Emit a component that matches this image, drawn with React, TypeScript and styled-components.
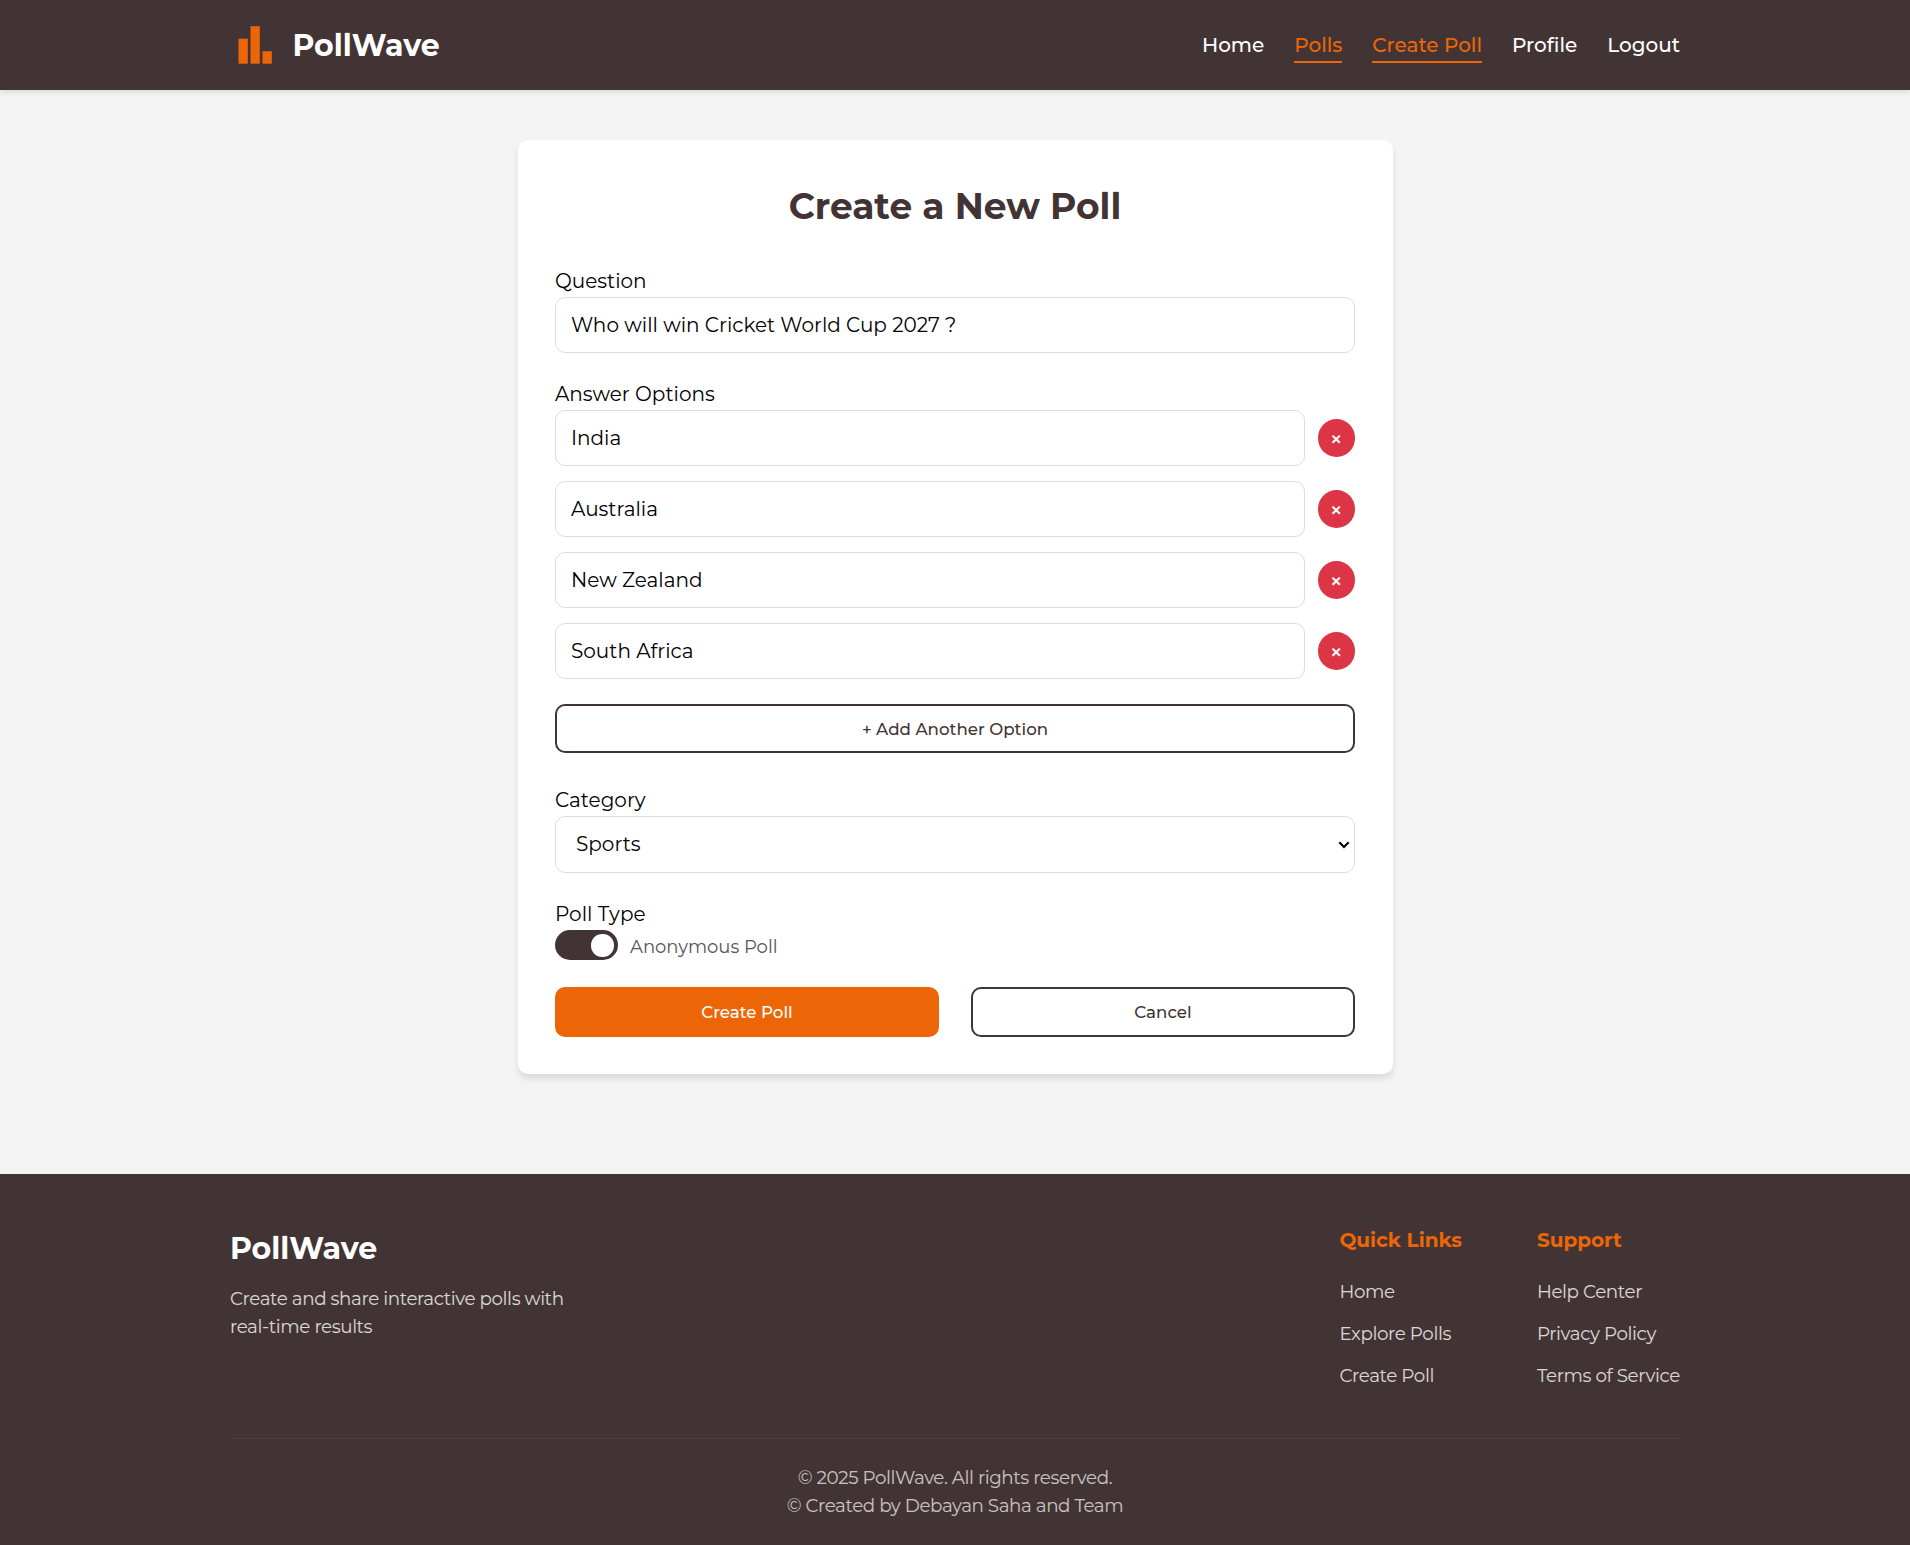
import React, { useState } from "react";
import styled, { createGlobalStyle, css } from "styled-components";

const color = {
  brand: "#423434",
  accent: "#ec6608",
  danger: "#dc3545",
  page: "#f4f4f4",
  border: "#dddddd",
};

const GlobalStyle = createGlobalStyle`
  *, *::before, *::after { box-sizing: border-box; margin: 0; padding: 0; }
  body {
    font-family: Montserrat, Inter, "Noto Sans", sans-serif;
    font-size: 20px;
    line-height: 1.6;
    color: #000;
    background: ${color.page};
  }
  ul { list-style: none; }
  a { color: inherit; text-decoration: none; }
`;

const Page = styled.div`
  display: flex;
  flex-direction: column;
  min-height: 100vh;
`;

const Container = styled.div`
  width: 1450px;
  margin: 0 auto;
`;

/* Header */

const Header = styled.header`
  height: 90px;
  background: ${color.brand};
  color: #fff;
  box-shadow: 0 2.5px 5px rgba(0, 0, 0, 0.1);
`;

const HeaderInner = styled(Container)`
  display: flex;
  align-items: center;
  justify-content: space-between;
  height: 100%;
`;

const Brand = styled.a`
  display: flex;
  align-items: center;
  gap: 12.5px;
`;

const BrandName = styled.span`
  padding-top: 1px;
  font-size: 30px;
  font-weight: 700;
  line-height: 48px;
`;

const NavList = styled.ul`
  display: flex;
  gap: 30px;
`;

const NavLink = styled.a<{ $active?: boolean }>`
  font-weight: 500;
  ${(p) =>
    p.$active &&
    css`
      padding-bottom: 4px;
      border-bottom: 2px solid ${color.accent};
      color: ${color.accent};
    `}
`;

/* Form card */

const Main = styled.main`
  display: flex;
  justify-content: center;
  padding: 50px 0 100px;
`;

const Card = styled.form`
  width: 875px;
  padding: 37.5px;
  border-radius: 10px;
  background: #fff;
  box-shadow: 0 5px 7.5px rgba(0, 0, 0, 0.1);
`;

const Title = styled.h1`
  margin-bottom: 30px;
  color: ${color.brand};
  font-size: 36px;
  font-weight: 700;
  line-height: 57.6px;
  text-align: center;
`;

const Field = styled.div<{ $gap?: number }>`
  margin-bottom: ${(p) => p.$gap ?? 25}px;
`;

const Label = styled.label`
  display: block;
`;

const Input = styled.input`
  display: block;
  flex: 1;
  width: 100%;
  min-width: 0;
  height: 56px;
  padding: 0 15px;
  border: 1px solid ${color.border};
  border-radius: 10px;
  background: #fff;
  color: #000;
  font: inherit;
  line-height: 24px;
  outline: none;
`;

const OptionList = styled.div`
  display: flex;
  flex-direction: column;
  gap: 15px;
  margin-bottom: 25px;
`;

const OptionRow = styled.div`
  display: flex;
  align-items: center;
  gap: 12.5px;
`;

const RemoveButton = styled.button`
  display: flex;
  align-items: center;
  justify-content: center;
  width: 37.5px;
  height: 38px;
  padding-top: 2px;
  border: 0;
  border-radius: 50%;
  background: ${color.danger};
  color: #fff;
  font-family: inherit;
  font-size: 23px;
  font-weight: 500;
  line-height: 1;
`;

const Button = styled.button<{ $variant: "primary" | "outline" }>`
  flex: 1;
  display: block;
  width: 100%;
  height: 49.4px;
  border: 2px solid ${(p) => (p.$variant === "primary" ? color.accent : color.brand)};
  border-radius: 10px;
  background: ${(p) => (p.$variant === "primary" ? color.accent : "transparent")};
  color: ${(p) => (p.$variant === "primary" ? "#fff" : color.brand)};
  font-family: inherit;
  font-size: 16.667px;
  font-weight: 500;
`;

const SelectBox = styled.div`
  display: grid;
  align-items: center;

  > * {
    grid-area: 1 / 1;
  }
`;

const Select = styled.select`
  appearance: none;
  width: 100%;
  height: 57.6px;
  padding: 0 20px;
  border: 1px solid ${color.border};
  border-radius: 10px;
  background: #fff;
  color: #000;
  font: inherit;
  outline: none;
`;

const Chevron = styled.svg`
  justify-self: end;
  width: 12px;
  height: 8px;
  margin: 2px 5px 0 0;
  pointer-events: none;
`;

const ToggleRow = styled.div`
  display: flex;
  align-items: center;
  gap: 12.5px;
  height: 30px;
`;

const Toggle = styled.button<{ $on: boolean }>`
  display: flex;
  align-items: center;
  justify-content: ${(p) => (p.$on ? "flex-end" : "flex-start")};
  width: 62.5px;
  height: 30px;
  padding: 0 3.75px;
  border: 0;
  border-radius: 15px;
  background: ${(p) => (p.$on ? color.brand : "#cccccc")};
`;

const Knob = styled.span`
  width: 22.5px;
  height: 22.5px;
  border-radius: 50%;
  background: #fff;
`;

const ToggleText = styled.span`
  padding-top: 5px;
  color: #555;
  font-size: 18px;
`;

const Actions = styled.div`
  display: flex;
  gap: 32px;
`;

/* Footer */

const Footer = styled.footer`
  flex: 1;
  padding: 50px 0 0;
  background: ${color.brand};
  color: #fff;
`;

const FooterTop = styled(Container)`
  display: flex;
  justify-content: space-between;
  padding-bottom: 36.75px;
  border-bottom: 1px solid rgba(255, 255, 255, 0.05);
`;

const FooterName = styled.h2`
  padding-top: 0.4px;
  margin-bottom: 12px;
  font-size: 30px;
  font-weight: 700;
  line-height: 48px;
`;

const FooterText = styled.p`
  max-width: 375px;
  font-size: 18.3px;
  letter-spacing: -0.39px;
  line-height: 28px;
  opacity: 0.8;
`;

const FooterColumns = styled.div`
  display: flex;
  gap: 75px;
`;

const ColumnTitle = styled.h3`
  margin-bottom: 18.75px;
  color: ${color.accent};
  font-size: 20px;
  font-weight: 700;
`;

const ColumnItem = styled.li`
  height: 32px;
  margin-bottom: 10px;
`;

const FooterLink = styled.a`
  font-size: 18.3px;
  letter-spacing: -0.38px;
  opacity: 0.8;
`;

const Copyright = styled.div`
  padding: 25.5px 0 23.5px;
  font-size: 18.3px;
  letter-spacing: -0.41px;
  line-height: 28px;
  text-align: center;
  opacity: 0.7;
`;

const navItems = [
  { label: "Home" },
  { label: "Polls", active: true },
  { label: "Create Poll", active: true },
  { label: "Profile" },
  { label: "Logout" },
];

const footerColumns = [
  { title: "Quick Links", links: ["Home", "Explore Polls", "Create Poll"] },
  { title: "Support", links: ["Help Center", "Privacy Policy", "Terms of Service"] },
];

function Logo() {
  return (
    <svg width="50" height="50" viewBox="0 0 50 50" fill={color.accent}>
      <rect x="8.5" y="18.7" width="9.3" height="25" />
      <rect x="20.5" y="6.2" width="9.3" height="37.5" />
      <rect x="32.5" y="31.2" width="9.3" height="12.5" />
    </svg>
  );
}

export default function App() {
  const [question, setQuestion] = useState("Who will win Cricket World Cup 2027 ?");
  const [options, setOptions] = useState(["India", "Australia", "New Zealand", "South Africa"]);
  const [anonymous, setAnonymous] = useState(true);

  return (
    <Page>
      <GlobalStyle />
      <Header>
        <HeaderInner>
          <Brand href="#">
            <Logo />
            <BrandName>PollWave</BrandName>
          </Brand>
          <nav>
            <NavList>
              {navItems.map((item) => (
                <li key={item.label}>
                  <NavLink href="#" $active={item.active}>
                    {item.label}
                  </NavLink>
                </li>
              ))}
            </NavList>
          </nav>
        </HeaderInner>
      </Header>

      <Main>
        <Card onSubmit={(e) => e.preventDefault()}>
          <Title>Create a New Poll</Title>

          <Field>
            <Label htmlFor="question">Question</Label>
            <Input id="question" value={question} onChange={(e) => setQuestion(e.target.value)} />
          </Field>

          <Field $gap={30.2}>
            <Label as="div">Answer Options</Label>
            <OptionList>
              {options.map((option, i) => (
                <OptionRow key={i}>
                  <Input
                    value={option}
                    onChange={(e) => setOptions(options.map((o, j) => (j === i ? e.target.value : o)))}
                  />
                  <RemoveButton type="button" onClick={() => setOptions(options.filter((_, j) => j !== i))}>
                    ×
                  </RemoveButton>
                </OptionRow>
              ))}
            </OptionList>
            <Button type="button" $variant="outline" onClick={() => setOptions([...options, ""])}>
              + Add Another Option
            </Button>
          </Field>

          <Field>
            <Label htmlFor="category">Category</Label>
            <SelectBox>
              <Select id="category" defaultValue="Sports">
                <option>Sports</option>
              </Select>
              <Chevron viewBox="0 0 12 8" fill="none" stroke="#000" strokeWidth="2.2">
                <path d="M1.3 1.3 6 6 10.7 1.3" />
              </Chevron>
            </SelectBox>
          </Field>

          <Field $gap={27.2}>
            <Label as="div">Poll Type</Label>
            <ToggleRow>
              <Toggle type="button" $on={anonymous} onClick={() => setAnonymous(!anonymous)}>
                <Knob />
              </Toggle>
              <ToggleText>Anonymous Poll</ToggleText>
            </ToggleRow>
          </Field>

          <Actions>
            <Button type="submit" $variant="primary">
              Create Poll
            </Button>
            <Button type="button" $variant="outline">
              Cancel
            </Button>
          </Actions>
        </Card>
      </Main>

      <Footer>
        <FooterTop>
          <div>
            <FooterName>PollWave</FooterName>
            <FooterText>Create and share interactive polls with real-time results</FooterText>
          </div>
          <FooterColumns>
            {footerColumns.map((column) => (
              <div key={column.title}>
                <ColumnTitle>{column.title}</ColumnTitle>
                <ul>
                  {column.links.map((link) => (
                    <ColumnItem key={link}>
                      <FooterLink href="#">{link}</FooterLink>
                    </ColumnItem>
                  ))}
                </ul>
              </div>
            ))}
          </FooterColumns>
        </FooterTop>
        <Copyright>
          <p>© 2025 PollWave. All rights reserved.</p>
          <p>© Created by Debayan Saha and Team</p>
        </Copyright>
      </Footer>
    </Page>
  );
}
